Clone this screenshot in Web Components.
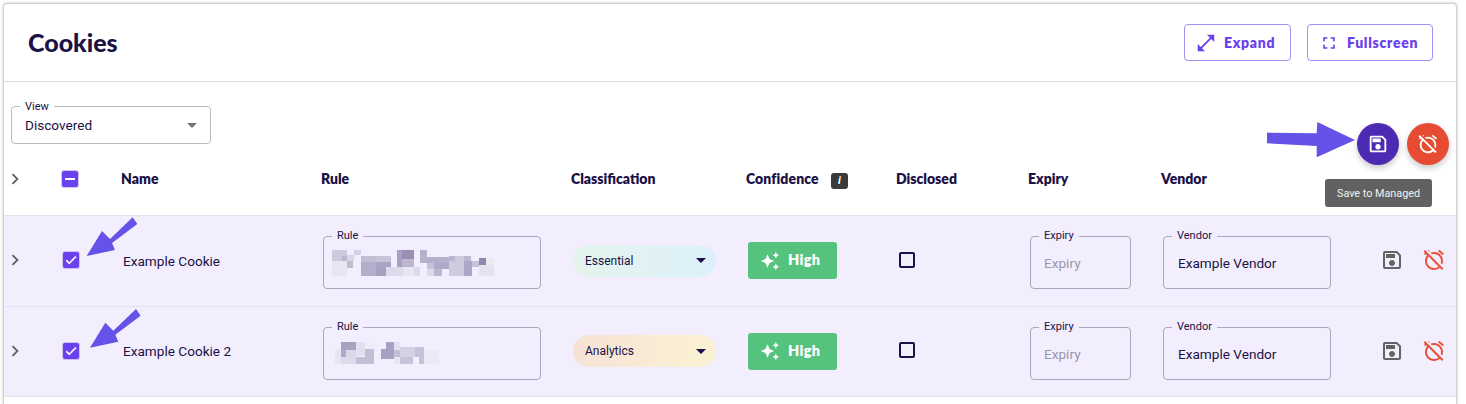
<!DOCTYPE html>
<html>
<head>
<meta charset="utf-8">
<title>Cookies</title>
<style>
  html, body { margin: 0; height: 100%; overflow: hidden; background: #fff; }
  body { padding: 3px 9px 0 3px; box-sizing: border-box; font-family: "Roboto", sans-serif; color: #1b1145; }
</style>
</head>
<body>
<cookie-card title-text="Cookies">
  <outline-button slot="actions" icon="expand" style="width:107px;padding-left:10px;gap:7px">Expand</outline-button>
  <outline-button slot="actions" icon="fullscreen" style="width:126px;padding-left:11px;gap:8px">Fullscreen</outline-button>

  <view-select slot="toolbar" label="View">Discovered</view-select>

  <header-row slot="table"></header-row>
  <cookie-row slot="table" name="Example Cookie" chip="Essential" blur="a"></cookie-row>
  <cookie-row slot="table" name="Example Cookie 2" chip="Analytics" blur="b" class="last"></cookie-row>

  <annotation-layer slot="overlay"></annotation-layer>
</cookie-card>

<script>
const ICONS = {
  chevron: 'M10 6L8.59 7.41 13.17 12l-4.58 4.59L10 18l6-6z',
  expand: 'M21 11V3h-8l3.29 3.29-10 10L3 13v8h8l-3.29-3.29 10-10z',
  fullscreen: 'M7 14H5v5h5v-2H7v-3zm-2-4h2V7h3V5H5v5zm12 7h-3v2h5v-5h-2v3zM14 5v2h3v3h2V5h-5z',
  save: 'M17 3H5c-1.11 0-2 .9-2 2v14c0 1.1.89 2 2 2h14c1.1 0 2-.9 2-2V7l-4-4zm2 16H5V5h11.17L19 7.83V19zm-7-7c-1.66 0-3 1.34-3 3s1.34 3 3 3 3-1.34 3-3-1.34-3-3-3zM6 6h9v4H6z',
  alarmOff: 'M10.04 6.29C10.66 6.11 11.32 6 12 6c3.86 0 7 3.14 7 7 0 .68-.11 1.34-.29 1.96l1.56 1.56c.47-1.08.73-2.27.73-3.52 0-4.97-4.03-9-9-9-1.25 0-2.44.26-3.53.72l1.57 1.57zm7.297-4.48 4.607 3.845-1.28 1.535-4.61-3.843zM3.02 2.1 1.61 3.51l1.37 1.37-.92.77 1.28 1.54 1.06-.88.8.8C3.83 8.69 3 10.75 3 13c0 4.97 4.03 9 9 9 2.25 0 4.31-.83 5.89-2.2l2.1 2.1 1.41-1.41L3.02 2.1zM12 20c-3.86 0-7-3.14-7-7 0-1.7.61-3.26 1.62-4.47l9.85 9.85C15.26 19.39 13.7 20 12 20zM7.48 3.73l.46-.38-1.28-1.54-.6.5z',
  sparkle: 'M19 9l1.25-2.75L23 5l-2.75-1.25L19 1l-1.25 2.75L15 5l2.75 1.25L19 9zm-7.5.5L9 4 6.5 9.5 1 12l5.5 2.5L9 20l2.5-5.5L17 12l-5.5-2.5zM19 15l-1.25 2.75L15 19l2.75 1.25L19 23l1.25-2.75L23 19l-2.75-1.25L19 15z',
  check: 'M9 16.2 4.8 12l-1.4 1.4L9 19 21 7l-1.4-1.4z'
};

function icon(name, size, color) {
  return `<svg width="${size}" height="${size}" viewBox="0 0 24 24" fill="${color}" style="display:block;flex:none"><path d="${ICONS[name]}"/></svg>`;
}

// pixelated parts of the rule values, coords are taken from a 3x crop
const BLURS = {
  a: { view: '40 35 652 156', rects: [
    [66,78,45,33,'#cfc9df'],[111,93,21,18,'#d8d3e6'],[96,96,15,15,'#bdb6d2'],[132,78,21,15,'#d5d0e3'],
    [66,111,45,45,'#e8e5f2'],[111,111,18,21,'#c0bad3'],[153,96,45,18,'#c3bcd5'],[198,96,45,18,'#c9c3da'],
    [153,114,45,42,'#b5aecb'],[198,114,45,18,'#aba3c4'],[198,132,30,24,'#a79fc0'],[228,129,51,27,'#dedaeb'],
    [261,78,15,51,'#a9a1c3'],[276,78,36,27,'#9a90b6'],[276,105,36,24,'#bdb6d2'],[279,129,33,27,'#e9e6f3'],
    [312,129,18,27,'#dedaeb'],[330,78,21,38,'#b8b1ce'],[351,99,66,18,'#b7b0cd'],[351,117,21,18,'#c6c0d8'],
    [372,117,45,18,'#b0a9c8'],[351,135,21,21,'#dedaeb'],[372,135,24,21,'#bdb6d2'],[417,96,18,15,'#bdb6d2'],
    [435,96,27,15,'#d0cbdf'],[462,96,21,15,'#bdb6d2'],[417,111,45,45,'#cfcade'],[462,111,24,45,'#aea6c6'],
    [486,111,21,18,'#c6c0d8'],[507,102,21,21,'#8f86ae'],[528,102,24,21,'#ece9f5'],[507,123,45,33,'#e6e3f0']
  ]},
  b: { view: '40 308 652 156', rects: [
    [75,378,18,42,'#e8e5f2'],[93,354,45,24,'#aaa2c3'],[93,378,15,21,'#b0a9c8'],[108,378,30,21,'#dcd8e9'],
    [93,399,45,21,'#dedaeb'],[138,354,27,42,'#e3dfee'],[165,354,27,21,'#f0edf8'],[165,375,27,24,'#c3bdd5'],
    [138,399,54,21,'#c3bdd5'],[213,375,15,30,'#a9a1c3'],[228,354,24,51,'#a9a1c3'],[252,354,18,24,'#e3dfee'],
    [252,378,18,21,'#c3bdd5'],[270,369,45,30,'#d5d0e3'],[315,369,27,30,'#c6c0d8'],[270,399,39,21,'#c9c3da'],
    [252,399,18,21,'#e8e5f2'],[327,399,15,21,'#c6c0d8'],[342,378,45,42,'#ece9f5']
  ]}
};

class CookieCard extends HTMLElement {
  constructor() {
    super();
    this.attachShadow({ mode: 'open' }).innerHTML = `
    <style>
      :host {
        display: block;
        position: relative;
        height: 401px;
        box-sizing: border-box;
        background: #fff;
        border: 1px solid #d2d2d2;
        border-bottom: 0;
        border-radius: 4px 4px 0 0;
        box-shadow: 0 0 3px rgba(0,0,0,.25);
        --cols: 57px 60px 200px 250px 175px 150px 132px 133px 212px 1fr;
      }
      header {
        display: flex;
        align-items: center;
        justify-content: space-between;
        height: 77px;
        padding: 0 23px 0 24px;
        border-bottom: 1px solid #dcdcdc;
      }
      h1 {
        margin: -2px 0 0;
        font: 900 25px "Lato", sans-serif;
        color: #1b1145;
      }
      .actions { display: flex; gap: 16px; }
      .toolbar { display: flex; padding: 24px 7px 0; height: 38px; }
    </style>
    <header><h1>${this.getAttribute('title-text')}</h1><div class="actions"><slot name="actions"></slot></div></header>
    <div class="toolbar"><slot name="toolbar"></slot></div>
    <slot name="table"></slot>
    <slot name="overlay"></slot>`;
  }
}

class OutlineButton extends HTMLElement {
  constructor() {
    super();
    this.attachShadow({ mode: 'open' }).innerHTML = `
    <style>
      :host {
        display: flex;
        align-items: center;
        height: 37px;
        box-sizing: border-box;
        border: 1px solid #a78ef5;
        border-radius: 4px;
        color: #6a41ec;
        font: 800 14px "Lato", sans-serif;
        letter-spacing: .7px;
      }
      span { margin-top: -1px; }
    </style>
    ${icon(this.getAttribute('icon'), this.getAttribute('icon') == 'expand' ? 22 : 20, '#6a41ec')}<span><slot></slot></span>`;
  }
}

class ViewSelect extends HTMLElement {
  constructor() {
    super();
    this.attachShadow({ mode: 'open' }).innerHTML = `
    <style>
      :host {
        display: flex;
        align-items: center;
        position: relative;
        width: 200px;
        height: 38px;
        box-sizing: border-box;
        padding: 0 13px 0 13px;
        border: 1px solid #bdbdbd;
        border-radius: 4px;
        font: 13.6px "Roboto", sans-serif;
        color: #1b1145;
      }
      label {
        position: absolute;
        left: 8px;
        top: -7px;
        padding: 0 5px;
        background: #fff;
        font-size: 11px;
        line-height: 13px;
      }
      span { flex: 1; }
      i { width: 0; height: 0; border: 5px solid transparent; border-top-color: #757575; border-bottom: 0; }
    </style>
    <label>${this.getAttribute('label')}</label><span><slot></slot></span><i></i>`;
  }
}

class CheckBox extends HTMLElement {
  constructor() {
    super();
    const state = this.getAttribute('state');
    let mark = '';
    if (state == 'checked') mark = '<svg width="14" height="14" viewBox="0 0 24 24" fill="#fff" stroke="#fff" stroke-width="1.2"><path d="' + ICONS.check + '"/></svg>';
    if (state == 'mixed') mark = '<b></b>';
    this.attachShadow({ mode: 'open' }).innerHTML = `
    <style>
      :host {
        display: flex;
        align-items: center;
        justify-content: center;
        width: 16px;
        height: 16px;
        box-sizing: border-box;
        border-radius: 2px;
        background: #6a41ec;
        box-shadow: 0 0 0 1px rgba(180,160,245,.6);
      }
      :host([state="empty"]) {
        background: transparent;
        border: 2px solid #1b1145;
        box-shadow: none;
      }
      b { width: 10px; height: 2px; background: #fff; }
    </style>${mark}`;
  }
}

class HeaderRow extends HTMLElement {
  constructor() {
    super();
    this.attachShadow({ mode: 'open' }).innerHTML = `
    <style>
      :host {
        display: grid;
        grid-template-columns: var(--cols);
        align-items: center;
        height: 71px;
        box-sizing: border-box;
        padding-bottom: 2px;
        font: 800 14px "Lato", sans-serif;
        color: #1b1145;
      }
      check-box { margin-left: 1px; }
      .conf { display: flex; align-items: center; }
      .conf span:first-child { width: 85px; letter-spacing: .1px; }
      .info {
        width: 17px;
        height: 16px;
        margin-top: 5px;
        border-radius: 3px;
        background: #3a3a3a;
        color: #fff;
        font: italic 700 11px/16px "Roboto", sans-serif;
        text-align: center;
      }
    </style>
    ${icon('chevron', 22, '#5f5f5f')}
    <check-box state="mixed"></check-box>
    <div>Name</div>
    <div>Rule</div>
    <div>Classification</div>
    <div class="conf"><span>Confidence</span><span class="info">i</span></div>
    <div>Disclosed</div>
    <div>Expiry</div>
    <div>Vendor</div>`;
  }
}

class OutlinedField extends HTMLElement {
  constructor() {
    super();
    const blur = BLURS[this.getAttribute('blur')];
    let art = '';
    if (blur) {
      art = `<svg class="blur" viewBox="${blur.view}" shape-rendering="crispEdges">` +
        blur.rects.map(r => `<rect x="${r[0]}" y="${r[1]}" width="${r[2]}" height="${r[3]}" fill="${r[4]}"/>`).join('') +
        '</svg>';
    }
    this.attachShadow({ mode: 'open' }).innerHTML = `
    <style>
      :host {
        display: flex;
        align-items: center;
        position: relative;
        height: 53px;
        box-sizing: border-box;
        margin-top: 2px;
        padding: 1px 14px 0;
        border: 1px solid #aaa6bd;
        border-radius: 4px;
        font: 13.6px "Roboto", sans-serif;
        color: #1b1145;
      }
      :host([placeholder]) { color: #9a96ad; padding-left: 13px; }
      label {
        position: absolute;
        left: 8px;
        top: -8px;
        padding: 0 5px;
        background: #f2eefd;
        color: #1b1145;
        font-size: 11px;
        line-height: 13px;
      }
      .blur { position: absolute; left: -1px; top: -1px; width: 218px; height: 52px; }
    </style>
    <label>${this.getAttribute('label')}</label>${art}<slot></slot>`;
  }
}

class ChipSelect extends HTMLElement {
  constructor() {
    super();
    this.attachShadow({ mode: 'open' }).innerHTML = `
    <style>
      :host {
        display: flex;
        align-items: center;
        justify-content: space-between;
        width: 143px;
        height: 32px;
        box-sizing: border-box;
        padding: 0 10px 0 12px;
        border-radius: 16px;
        font: 12px "Roboto", sans-serif;
        color: #1b1145;
        background: linear-gradient(90deg, #e3f4ec, #ddf0fa);
      }
      :host([tone="Analytics"]) { background: linear-gradient(90deg, #f6e2d5, #fbf2d4); }
      i { width: 0; height: 0; border: 5px solid transparent; border-top-color: #1b1145; border-bottom: 0; }
    </style>
    <span><slot></slot></span><i></i>`;
  }
}

class ConfidenceBadge extends HTMLElement {
  constructor() {
    super();
    this.attachShadow({ mode: 'open' }).innerHTML = `
    <style>
      :host {
        display: flex;
        align-items: center;
        gap: 8px;
        width: 89px;
        height: 37px;
        box-sizing: border-box;
        padding-left: 12px;
        border-radius: 3px;
        background: #55c27e;
        color: #fff;
        font: 800 14.5px "Lato", sans-serif;
        letter-spacing: .3px;
      }
      span { margin-top: -2px; }
    </style>
    ${icon('sparkle', 20, '#fff')}<span><slot></slot></span>`;
  }
}

class CookieRow extends HTMLElement {
  constructor() {
    super();
    const chip = this.getAttribute('chip');
    this.attachShadow({ mode: 'open' }).innerHTML = `
    <style>
      :host {
        display: grid;
        grid-template-columns: var(--cols);
        align-items: center;
        height: 91px;
        box-sizing: border-box;
        border-top: 1px solid #e2dff0;
        background: #f2eefd;
        font: 13.6px "Roboto", sans-serif;
        color: #1b1145;
      }
      :host(.last) { border-bottom: 1px solid #e2e2e2; }
      :host(.last) outlined-field { margin-top: 3px; }
      .cell { padding-left: 2px; }
      .tick { margin-left: 2px; margin-top: -2px; }
      .chev { margin-top: -2px; }
      .name { padding-left: 2px; margin-top: -1px; }
      .empty { margin-left: 3px; margin-top: -3px; }
      .rule { width: 218px; }
      .expiry { width: 101px; }
      .vendor { width: 168px; }
      .icons { display: flex; gap: 18px; margin-top: -2px; margin-left: 7px; }
      chip-select, confidence-badge { margin-top: -1px; }
    </style>
    <div class="chev">${icon('chevron', 22, '#5f5f5f')}</div>
    <check-box class="tick" state="checked"></check-box>
    <div class="name">${this.getAttribute('name')}</div>
    <div class="cell"><outlined-field class="rule" label="Rule" blur="${this.getAttribute('blur')}"></outlined-field></div>
    <div class="cell"><chip-select tone="${chip}">${chip}</chip-select></div>
    <div class="cell"><confidence-badge>High</confidence-badge></div>
    <check-box class="empty" state="empty"></check-box>
    <div class="cell"><outlined-field class="expiry" label="Expiry" placeholder>Expiry</outlined-field></div>
    <div class="cell"><outlined-field class="vendor" label="Vendor">Example Vendor</outlined-field></div>
    <div class="icons">${icon('save', 24, '#636363')}${icon('alarmOff', 24, '#ea5037')}</div>`;
  }
}

class ActionFab extends HTMLElement {
  constructor() {
    super();
    this.attachShadow({ mode: 'open' }).innerHTML = `
    <style>
      :host {
        display: flex;
        align-items: center;
        justify-content: center;
        width: 42px;
        height: 42px;
        border-radius: 50%;
        background: #4d2ab2;
        box-shadow: 0 3px 6px rgba(0,0,0,.22);
      }
      :host([tone="red"]) { background: #e64c32; }
    </style>
    ${icon(this.getAttribute('icon'), 22, '#fff')}`;
  }
}

// everything here sits on top of the table, coords are relative to the card
class AnnotationLayer extends HTMLElement {
  constructor() {
    super();
    this.attachShadow({ mode: 'open' }).innerHTML = `
    <style>
      :host { position: absolute; left: -4px; top: -4px; width: 1466px; height: 404px; pointer-events: none; }
      .fabs { position: absolute; left: 1357px; top: 123px; display: flex; gap: 8px; }
      .tip {
        position: absolute;
        left: 1325px;
        top: 179px;
        width: 107px;
        height: 28px;
        border-radius: 3px;
        background: #616161;
        color: #f2f2f2;
        font: 10.8px/29px "Roboto", sans-serif;
        text-align: center;
      }
      svg { position: absolute; left: 0; top: 0; }
    </style>
    <svg width="1466" height="404" fill="#6552e8">
      <polygon points="1267,132.7 1316.7,133.3 1317.3,122 1355,140 1316.7,157.3 1316.7,146 1267,143.3"/>
      <polygon points="86.7,256 102,231 110,239 132.7,217.3 137.3,224 112,243 115,250"/>
      <polygon points="90,347.7 105.3,322.7 113.3,330.7 136,309 140.6,315.7 115.3,334.7 118.3,341.7"/>
    </svg>
    <div class="fabs"><action-fab icon="save"></action-fab><action-fab icon="alarmOff" tone="red"></action-fab></div>
    <div class="tip">Save to Managed</div>`;
  }
}

customElements.define('check-box', CheckBox);
customElements.define('outline-button', OutlineButton);
customElements.define('view-select', ViewSelect);
customElements.define('outlined-field', OutlinedField);
customElements.define('chip-select', ChipSelect);
customElements.define('confidence-badge', ConfidenceBadge);
customElements.define('action-fab', ActionFab);
customElements.define('header-row', HeaderRow);
customElements.define('cookie-row', CookieRow);
customElements.define('annotation-layer', AnnotationLayer);
customElements.define('cookie-card', CookieCard);
</script>
</body>
</html>
